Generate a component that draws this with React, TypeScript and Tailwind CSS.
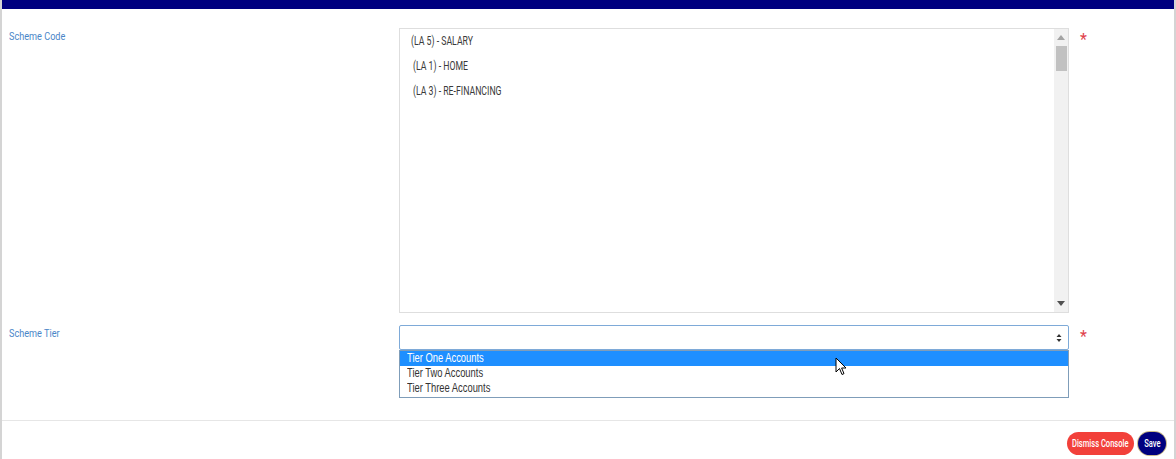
import React from "react";

function Sq({ children, s, o = "origin-left" }: { children: React.ReactNode; s: string; o?: string }) {
  return <span className={`inline-block whitespace-nowrap ${o} ${s}`}>{children}</span>;
}

export default function App() {
  return (
    <div className="relative w-[1176px] h-[459px] bg-white overflow-hidden border-l-2 border-r-2 border-[#d4d4d4]" style={{ fontFamily: 'Roboto, "Liberation Sans", sans-serif' }}>
      <div className="h-[9px] bg-[#00007f]" />
      {/* Row 1 */}
      <div className="flex mt-[19px]">
        <div className="w-[397px] pl-[7px] pt-[1px] text-[11px] text-[#4a86c8]">
          <Sq s="[transform:scaleX(0.83)]">Scheme Code</Sq>
        </div>
        <div className="relative w-[670px] h-[285px] border border-[#dedede] bg-white">
          <div className="flex flex-col pl-[11px] pt-[3px] text-[13px] text-[#3a3a3a] gap-[8px]">
            <div className="h-[17px] leading-[17px]"><Sq s="[transform:scaleX(0.67)]">(LA 5) - SALARY</Sq></div>
            <div className="h-[17px] leading-[17px] pl-[2px]"><Sq s="[transform:scaleX(0.67)]">(LA 1) - HOME</Sq></div>
            <div className="h-[17px] leading-[17px] pl-[2px]"><Sq s="[transform:scaleX(0.67)]">(LA 3) - RE-FINANCING</Sq></div>
          </div>
          <div className="absolute right-0 top-0 bottom-0 w-[14px] bg-[#f1f1f1] flex flex-col items-center">
            <div className="mt-[6px] w-0 h-0 border-l-[4px] border-r-[4px] border-b-[5px] border-l-transparent border-r-transparent border-b-[#a3a3a3]" />
            <div className="mt-[6px] w-[11px] h-[25px] bg-[#c1c1c1]" />
            <div className="mt-auto mb-[6px] w-0 h-0 border-l-[4px] border-r-[4px] border-t-[5px] border-l-transparent border-r-transparent border-t-[#505050]" />
          </div>
        </div>
        <div className="pl-[11px] pt-[4px] text-[16px] leading-[16px] text-[#e0424b]">*</div>
      </div>
      {/* Row 2 */}
      <div className="flex mt-[12px]">
        <div className="w-[397px] pl-[7px] pt-[1px] text-[11px] text-[#4a86c8]">
          <Sq s="[transform:scaleX(0.83)]">Scheme Tier</Sq>
        </div>
        <div className="relative w-[670px]">
          <div className="h-[25px] border border-[#7eaad8] rounded-[2px] bg-white flex items-center justify-end pr-[6px]">
            <svg width="6" height="10" viewBox="0 0 6 10"><path d="M3 1 L5.5 4 H0.5Z M3 9 L5.5 6 H0.5Z" fill="#333" /></svg>
          </div>
          <div className="absolute left-0 right-0 top-[25px] border border-[#7f9db9] bg-white text-[12.5px] text-[#333]" style={{ fontFamily: '"Liberation Sans", Arial, sans-serif' }}>
            <div className="h-[15px] leading-[15px] pl-[7px] bg-[#1e8fff] text-white"><Sq s="[transform:scaleX(0.75)]">Tier One Accounts</Sq></div>
            <div className="h-[15px] leading-[15px] pl-[7px]"><Sq s="[transform:scaleX(0.75)]">Tier Two Accounts</Sq></div>
            <div className="h-[15px] leading-[15px] pl-[7px] mb-[1px]"><Sq s="[transform:scaleX(0.75)]">Tier Three Accounts</Sq></div>
          </div>
        </div>
        <div className="pl-[11px] pt-[4px] text-[16px] leading-[16px] text-[#e0424b]">*</div>
      </div>
      {/* Footer */}
      <div className="mt-[70px] border-t border-[#e6e6e6] flex justify-end items-center gap-[4px] pt-[11px] pr-[8px]">
        <button className="w-[67px] h-[23px] rounded-full bg-[#f2403a] text-white text-[10.5px] font-medium flex items-center justify-center">
          <Sq o="origin-center" s="[transform:scaleX(0.72)]">Dismiss Console</Sq>
        </button>
        <button className="w-[28px] h-[23px] rounded-full bg-[#00007f] text-white text-[10.5px] font-medium ring-1 ring-[#c8b98a] flex items-center justify-center">
          <Sq o="origin-center" s="[transform:scaleX(0.72)]">Save</Sq>
        </button>
      </div>
      {/* cursor */}
      <svg className="absolute left-[833px] top-[357px]" width="12" height="19" viewBox="0 0 12 19">
        <path d="M1 1 L1 15 L4.5 11.5 L7 17.5 L9 16.6 L6.6 11 L11 11 Z" fill="#fff" stroke="#000" strokeWidth="1" strokeLinejoin="round" />
      </svg>
    </div>
  );
}
